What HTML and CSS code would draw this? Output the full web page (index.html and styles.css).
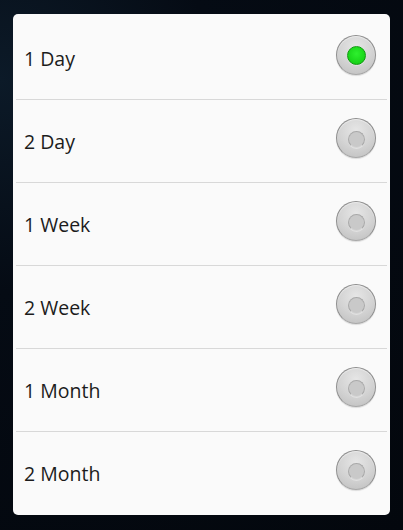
FILE: index.html
```html
<!DOCTYPE html>
<html lang="en">
<head>
    <meta charset="UTF-8">
    <meta name="viewport" content="width=device-width, initial-scale=1.0">
    <link rel="stylesheet" href="styles.css">
    <title>Period</title>
</head>
<body>

    <div class="dialog">
        <ul class="choice-list">
            <li class="choice"><span class="label">1 Day</span><span class="radio checked"></span></li>
            <li class="choice"><span class="label">2 Day</span><span class="radio"></span></li>
            <li class="choice"><span class="label">1 Week</span><span class="radio"></span></li>
            <li class="choice"><span class="label">2 Week</span><span class="radio"></span></li>
            <li class="choice"><span class="label">1 Month</span><span class="radio"></span></li>
            <li class="choice"><span class="label">2 Month</span><span class="radio"></span></li>
        </ul>
    </div>

</body>
</html>
```

FILE: styles.css
```css
body {
    margin: 0;
    padding: 14px 13px;
    min-height: 530px;
    box-sizing: border-box;
    background: radial-gradient(circle at 0% 15%, #0c1a28 0%, #050b14 35%, #03070d 100%);
    font-family: 'Open Sans', 'Noto Sans', sans-serif;
}

.dialog {
    width: 377px;
    background: #fafafa;
    border-radius: 5px;
    padding: 3px 0 1px;
}

.choice-list {
    list-style: none;
    margin: 0;
    padding: 0;
}

.choice {
    height: 82px;
    margin: 0 3px;
    border-bottom: 1px solid #d8d8d8;
    display: flex;
    align-items: center;
    justify-content: space-between;
    padding: 0 11px 0 8px;
}

.choice:last-child {
    border-bottom: none;
}

.label {
    font-size: 19.5px;
    color: #1c1c1c;
}

/* radio button, old android look */
.radio {
    width: 38px;
    height: 38px;
    margin-bottom: 6px;
    border-radius: 50%;
    border: 1px solid #8e8e8e;
    border-bottom-color: #a8a8a8;
    background: radial-gradient(circle at 50% 30%, #e6e6e6 0%, #d4d4d4 50%, #bdbdbd 100%);
    box-shadow: inset 0 1px 1px #eeeeee, 0 1px 1px rgba(0, 0, 0, 0.12);
    display: flex;
    align-items: center;
    justify-content: center;
}

.radio::after {
    content: "";
    width: 15px;
    height: 15px;
    margin-top: 2px;
    border-radius: 50%;
    background: #c9c9c9;
    border: 1px solid #a9a9a9;
    border-bottom-color: #d6d6d6;
    box-shadow: 0 1px 0 #e2e2e2;
}

.radio.checked::after {
    width: 17px;
    height: 17px;
    margin-top: 1px;
    background: radial-gradient(circle at 50% 40%, #2ef02e 0%, #18d418 70%, #10b010 100%);
    border: 1px solid #0e9a0e;
}
```
